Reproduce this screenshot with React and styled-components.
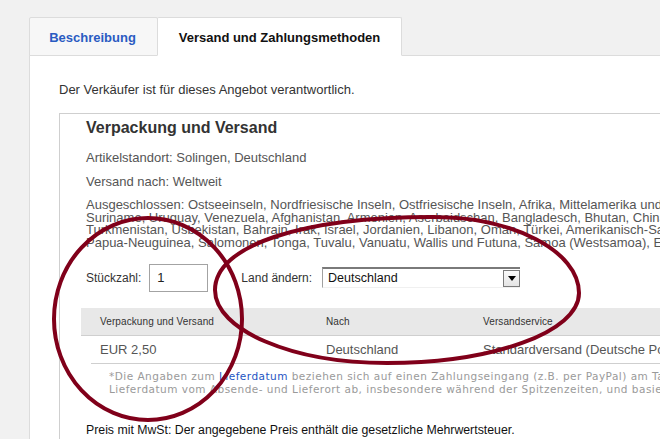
import React from 'react'
import styled, {createGlobalStyle} from 'styled-components';

const GlobalStyle = createGlobalStyle`
    html, body {
        margin: 0;
        padding: 0;
        overflow: hidden;
        background: #f1f1f1;
        font-family: "Liberation Sans", Arial, sans-serif;
    }
`
const Page = styled.div`
    position: relative;
    width: 980px;
    height: 439px;
    padding: 17px 0 0 29px;
    box-sizing: border-box;
`
const TabBar = styled.div`
    display: flex;
    position: relative;
    z-index: 1;
    margin-bottom: -1px;
`
const Tab = styled.div`
    box-sizing: border-box;
    height: 39px;
    width: ${props => props.width}px;
    margin-left: ${props => props.active ? -1 : 0}px;
    display: flex;
    align-items: center;
    justify-content: center;
    border: 1px solid #dcdcdc;
    border-bottom-color: ${props => props.active ? '#fff' : '#dcdcdc'};
    border-radius: 2px 2px 0 0;
    background: ${props => props.active ? '#fff' : '#f7f7f7'};
    color: ${props => props.active ? '#111' : '#2a5bc2'};
    font-size: 13px;
    font-weight: bold;
    padding-top: 1px;
    padding-right: ${props => props.active ? 0 : 2}px;
`
const Panel = styled.div`
    background: #fff;
    border: 1px solid #dcdcdc;
    border-right: none;
    padding: 27px 0 40px 29px;
    height: 400px;
`
const Intro = styled.div`
    font-size: 13px;
    line-height: 14px;
    color: #333;
    margin-bottom: 16px;
`
const Box = styled.div`
    border-top: 1px solid #cfcfcf;
    border-left: 1px solid #cfcfcf;
    padding: 4px 0 0 26px;
    height: 400px;
`
const Heading = styled.h2`
    margin: 0 0 14px;
    font-size: 16px;
    line-height: 19px;
    font-weight: bold;
    color: #333;
`
const Info = styled.div`
    font-size: 13px;
    line-height: 14px;
    color: #555;
    margin-bottom: 10px;
`
const Excluded = styled.div`
    font-size: 13px;
    line-height: 12.7px;
    color: #555;
    white-space: nowrap;
    span { display: block; }
`
const Controls = styled.div`
    display: flex;
    align-items: center;
    margin-top: 14px;
    font-size: 12px;
    color: #333;
`
const Label = styled.span`
    margin-right: ${props => props.gap}px;
`
const QtyInput = styled.div`
    box-sizing: border-box;
    width: 59px;
    height: 28px;
    border: 1px solid #a3a3a3;
    padding-left: 7px;
    display: flex;
    align-items: center;
    font-size: 13px;
    color: #222;
    margin-right: 33px;
`
const Select = styled.div`
    box-sizing: border-box;
    width: 198px;
    height: 21px;
    border-top: 2px solid #7a7a7a;
    border-left: 1px solid #a0a0a0;
    border-bottom: 1px solid #f0f0f0;
    display: flex;
    align-items: center;
    justify-content: space-between;
    padding-left: 5px;
    font-size: 12.5px;
    color: #111;
`
const SelectButton = styled.div`
    box-sizing: border-box;
    width: 17px;
    height: 17px;
    margin-top: 1px;
    border: 1px solid #7a7a7a;
    background: linear-gradient(#fafafa, #e4e4e4);
    display: flex;
    align-items: center;
    justify-content: center;
`
const Table = styled.div`
    margin: 16px 0 0 -5px;
`
const HeaderRow = styled.div`
    display: grid;
    grid-template-columns: 226px 157px 1fr;
    height: 27px;
    align-items: center;
    background: #e8e8e8;
    border-bottom: 1px solid #cfcfcf;
    font-size: 10px;
    letter-spacing: 0.1px;
    color: #333;
`
const Row = styled.div`
    display: grid;
    grid-template-columns: 226px 157px 1fr;
    height: 27px;
    align-items: center;
    font-size: 13px;
    color: #555;
    white-space: nowrap;
`
const Cell = styled.div`
    padding-left: 19px;
    white-space: nowrap;
`
const Divider = styled.div`
    height: 1px;
    background: #cfcfcf;
    margin-left: 10px;
`
const Note = styled.div`
    padding: 6px 0 0 28px;
    font-family: "DejaVu Sans", Verdana, sans-serif;
    font-size: 10.5px;
    letter-spacing: 0.48px;
    line-height: 13px;
    color: #9a9a9a;
    white-space: nowrap;
    span { display: block; }
    a { color: #2455c3; text-decoration: none; }
`
const Footer = styled.div`
    margin-top: 27px;
    font-size: 12.3px;
    line-height: 14px;
    color: #111;
`
const Marks = styled.svg`
    position: absolute;
    top: 0;
    left: 0;
    pointer-events: none;
    z-index: 5;
`

function App() {
    return (
        <Page>
            <GlobalStyle />
            <TabBar>
                <Tab width={129}>Beschreibung</Tab>
                <Tab width={245} active>Versand und Zahlungsmethoden</Tab>
            </TabBar>
            <Panel>
                <Intro>Der Verkäufer ist für dieses Angebot verantwortlich.</Intro>
                <Box>
                    <Heading>Verpackung und Versand</Heading>
                    <Info>Artikelstandort: Solingen, Deutschland</Info>
                    <Info>Versand nach: Weltweit</Info>
                    <Excluded>
                        <span>Ausgeschlossen: Ostseeinseln, Nordfriesische Inseln, Ostfriesische Inseln, Afrika, Mittelamerika und Karibik, Naher Osten,</span>
                        <span>Suriname, Uruguay, Venezuela, Afghanistan, Armenien, Aserbaidschan, Bangladesch, Bhutan, China, Georgien, Indien,</span>
                        <span>Turkmenistan, Usbekistan, Bahrain, Irak, Israel, Jordanien, Libanon, Oman, Türkei, Amerikanisch-Samoa, Cookinseln,</span>
                        <span>Papua-Neuguinea, Salomonen, Tonga, Tuvalu, Vanuatu, Wallis und Futuna, Samoa (Westsamoa), Ecuador</span>
                    </Excluded>
                    <Controls>
                        <Label gap={8}>Stückzahl:</Label>
                        <QtyInput>1</QtyInput>
                        <Label gap={10}>Land ändern:</Label>
                        <Select>
                            Deutschland
                            <SelectButton>
                                <svg width="8" height="5" viewBox="0 0 8 5"><path d="M0 0h8L4 5z" fill="#000"/></svg>
                            </SelectButton>
                        </Select>
                    </Controls>
                    <Table>
                        <HeaderRow>
                            <Cell>Verpackung und Versand</Cell>
                            <Cell>Nach</Cell>
                            <Cell>Versandservice</Cell>
                        </HeaderRow>
                        <Row>
                            <Cell>EUR 2,50</Cell>
                            <Cell>Deutschland</Cell>
                            <Cell>Standardversand (Deutsche Post)</Cell>
                        </Row>
                        <Divider />
                        <Note>
                            <span>*Die Angaben zum <a href="#">Lieferdatum</a> beziehen sich auf einen Zahlungseingang (z.B. per PayPal) am Tag des Kaufes.</span>
                            <span>Lieferdatum vom Absende- und Lieferort ab, insbesondere während der Spitzenzeiten, und basiert auf der Zeit</span>
                        </Note>
                    </Table>
                    <Footer>Preis mit MwSt: Der angegebene Preis enthält die gesetzliche Mehrwertsteuer.</Footer>
                </Box>
            </Panel>
            {/* hand drawn markings over the screenshot */}
            <Marks width="660" height="439" viewBox="0 0 660 439">
                <g fill="none" stroke="#80001a" strokeWidth="4">
                    <ellipse cx="148" cy="319" rx="94" ry="101" />
                    <path d="M215 290 C215 246 300 217 433 217 C513 217 579 251 579 293 C579 332 493 363 387 363 C292 363 215 330 215 290 Z" />
                </g>
            </Marks>
        </Page>
    )
}

export default App
